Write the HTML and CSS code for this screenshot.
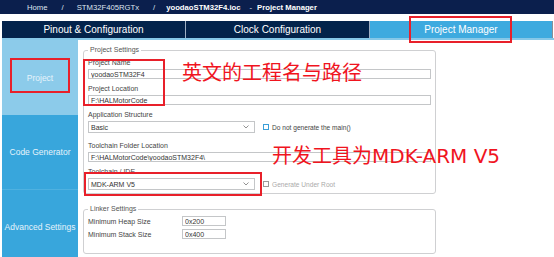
FILE: index.html
```html
<!DOCTYPE html>
<html lang="zh-CN">
<head>
    <meta charset="UTF-8">
    <meta name="viewport" content="width=device-width, initial-scale=1.0">
    <title>Project Manager</title>
    <link rel="stylesheet" href="styles.css">
</head>
<body>
    <div class="topbar">
        <span class="crumb">Home</span>
        <span class="sep">/</span>
        <span class="crumb chip">STM32F405RGTx</span>
        <span class="sep sep-2">/</span>
        <b class="file">yoodaoSTM32F4.ioc</b>
        <span class="dash">-</span>
        <b class="page-name">Project Manager</b>
    </div>

    <nav class="tabs">
        <div class="tab">Pinout &amp; Configuration</div>
        <div class="tab">Clock Configuration</div>
        <div class="tab active">Project Manager</div>
    </nav>

    <div class="workspace">
        <aside class="sidebar">
            <div class="side-item selected">Project</div>
            <div class="side-item">Code Generator</div>
            <div class="side-item">Advanced Settings</div>
        </aside>

        <main class="content">
            <fieldset class="group">
                <legend>Project Settings</legend>
                <div class="field">
                    <label>Project Name</label>
                    <input type="text" class="text" value="yoodaoSTM32F4">
                </div>
                <div class="field">
                    <label>Project Location</label>
                    <input type="text" class="text" value="F:\HALMotorCode">
                </div>
                <div class="field field-select">
                    <label>Application Structure</label>
                    <div class="row">
                        <div class="select">
                            <span>Basic</span>
                            <svg width="6" height="4" viewBox="0 0 6 4"><polyline points="0.5,0.5 3,3 5.5,0.5" fill="none" stroke="#777" stroke-width="0.8"/></svg>
                        </div>
                        <span class="check"></span>
                        <span class="check-label">Do not generate the main()</span>
                    </div>
                </div>
                <div class="field">
                    <label>Toolchain Folder Location</label>
                    <input type="text" class="text" value="F:\HALMotorCode\yoodaoSTM32F4\">
                </div>
                <div class="field">
                    <label>Toolchain / IDE</label>
                    <div class="row">
                        <div class="select">
                            <span>MDK-ARM V5</span>
                            <svg width="6" height="4" viewBox="0 0 6 4"><polyline points="0.5,0.5 3,3 5.5,0.5" fill="none" stroke="#777" stroke-width="0.8"/></svg>
                        </div>
                        <span class="check off"></span>
                        <span class="check-label off">Generate Under Root</span>
                    </div>
                </div>
            </fieldset>

            <fieldset class="group linker">
                <legend>Linker Settings</legend>
                <div class="linker-grid">
                    <label>Minimum Heap Size</label>
                    <input type="text" class="text small" value="0x200">
                    <label>Minimum Stack Size</label>
                    <input type="text" class="text small" value="0x400">
                </div>
            </fieldset>
        </main>
    </div>

    <!-- annotations drawn over the screenshot -->
    <div class="mark mark-tab"></div>
    <div class="mark mark-side"></div>
    <div class="mark mark-name"></div>
    <div class="mark mark-ide"></div>
    <div class="note note-name">英文的工程名与路径</div>
    <div class="note note-ide">开发工具为<span class="latin">MDK-ARM V5</span></div>
</body>
</html>
```

FILE: styles.css
```css
body {
    margin: 0;
    width: 554px;
    height: 257px;
    overflow: hidden;
    position: relative;
    background: #fff;
    font-family: "Liberation Sans", Arial, sans-serif;
}

/* top breadcrumb bar */
.topbar {
    height: 14px;
    background-color: #0b1f4d;
    color: #dfe5ef;
    font-size: 7.7px;
    display: flex;
    align-items: center;
    padding-left: 27px;
    white-space: nowrap;
}
.sep {margin-left: 14px;}
.chip {margin-left: 13px;}
.sep-2 {margin-left: 14px;}
.file {margin-left: 11px; color: #fff;}
.dash {margin-left: 9px;}
.page-name {margin-left: 5px; color: #fff;}

/* main tabs */
.tabs {
    margin: 7px 0 0 2px;
    width: 551px;
    height: 17px;
    display: grid;
    grid-template-columns: repeat(3, 1fr);
    gap: 1px;
    background-color: #9fb0c4;
}
.tab {
    background-color: #03234b;
    color: #fff;
    font-size: 10px;
    display: flex;
    align-items: center;
    justify-content: center;
}
.tab.active {
    background-color: #3eaadf;
    border-right: 1px solid #8a8f96;
}

/* workspace */
.workspace {
    display: flex;
    margin-left: 2px;
    border-top: 2px solid #86c8e8;
    height: 217px;
}
.sidebar {
    width: 76px;
    display: flex;
    flex-direction: column;
    flex-shrink: 0;
}
.side-item {
    height: 75px;
    flex-shrink: 0;
    display: flex;
    align-items: center;
    justify-content: center;
    font-size: 8.5px;
    color: #e6f3fb;
    background-color: #38a6dc;
    border-bottom: 1px solid #4fb1e0;
    box-sizing: border-box;
}
.side-item.selected {
    background-color: #8ccbea;
    border-bottom: none;
}

.content {
    padding: 6px 0 0 5px;
}

.group {
    width: 353px;
    box-sizing: border-box;
    margin: 0;
    padding: 5px 4px 3px;
    border: 1px solid #cfd0d2;
    border-radius: 3px;
}
.group legend {
    padding: 0 2px;
    font-size: 7px;
    line-height: 8px;
    color: #555;
}

.field {margin-bottom: 6px;}
.field:last-child {margin-bottom: 0;}
.field-select {margin-bottom: 9px;}
.field label {
    display: block;
    font-size: 7px;
    line-height: 8px;
    color: #444;
    margin-bottom: 2px;
}

.text {
    display: block;
    width: 100%;
    height: 10px;
    box-sizing: border-box;
    margin: 0;
    padding: 0 2px;
    border: 1px solid #c4c6c8;
    font-family: inherit;
    font-size: 7px;
    color: #333;
    background: #fff;
}

.row {
    display: flex;
    align-items: center;
}
.select {
    width: 167px;
    height: 12px;
    box-sizing: border-box;
    border: 1px solid #c4c6c8;
    padding: 0 5px 0 2px;
    display: flex;
    align-items: center;
    justify-content: space-between;
    font-size: 7px;
    color: #333;
}
.check {
    width: 6px;
    height: 6px;
    box-sizing: border-box;
    border: 1px solid #3b9fd8;
    margin-left: 8px;
}
.check.off {border-color: #9a9a9a;}
.check-label {
    margin-left: 3px;
    font-size: 6.6px;
    color: #444;
}
.check-label.off {color: #aaa;}

.linker {
    margin-top: 11px;
    padding: 3px 4px 14px;
}
.linker-grid {
    display: grid;
    grid-template-columns: 94px 44px;
    row-gap: 3px;
    align-items: center;
}
.linker-grid label {
    font-size: 7px;
    color: #444;
}

/* red annotations */
.mark {
    position: absolute;
    border: 2px solid #e8202a;
    box-sizing: border-box;
}
.mark-tab {left: 409px; top: 16px; width: 103px; height: 27px;}
.mark-side {left: 10px; top: 58px; width: 60px; height: 35px;}
.mark-name {left: 83px; top: 59px; width: 82px; height: 47px;}
.mark-ide {left: 84px; top: 172px; width: 178px; height: 24px;}

.note {
    position: absolute;
    font-family: "Noto Sans CJK SC", "Noto Sans", sans-serif;
    font-size: 20px;
    line-height: 20px;
    color: #f0141e;
    white-space: nowrap;
}
.note .latin {
    font-family: "DejaVu Sans", "Noto Sans CJK SC", sans-serif;
}
.note-name {left: 182px; top: 62px;}
.note-ide {left: 272px; top: 145px;}
```
